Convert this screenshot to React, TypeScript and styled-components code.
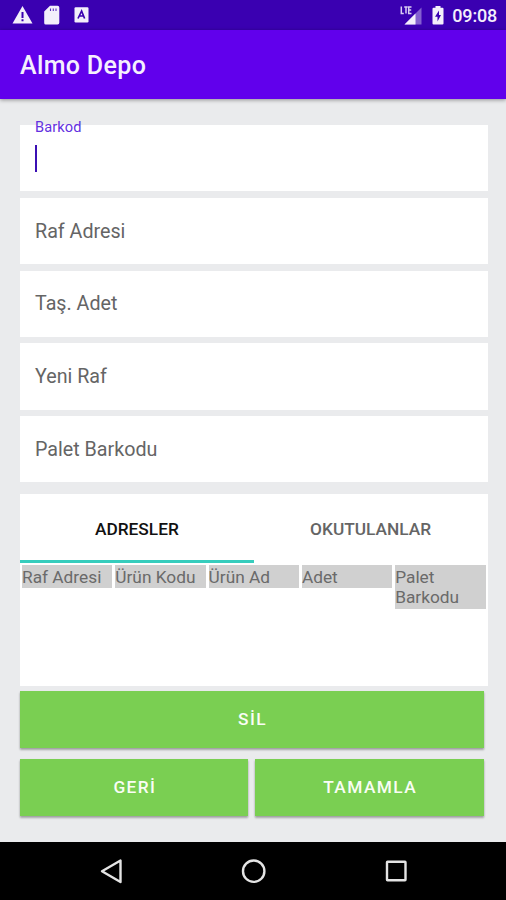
import React from "react";
import styled, { createGlobalStyle } from "styled-components";

const GlobalStyle = createGlobalStyle`
  * { box-sizing: border-box; }
  html, body { margin: 0; padding: 0; }
  body { font-family: Roboto, "Liberation Sans", sans-serif; }
`;

const Screen = styled.div`
  width: 506px;
  height: 900px;
  display: flex;
  flex-direction: column;
  overflow: hidden;
  background: #eaebed;
`;

const StatusBar = styled.header`
  height: 30px;
  flex: none;
  display: flex;
  align-items: center;
  justify-content: space-between;
  padding: 0 9px 0 12px;
  background: #3a00b1;
  color: #f3effb;
`;

const StatusGroup = styled.div`
  display: flex;
  align-items: center;
  height: 30px;
`;

const StatusIcon = styled.svg<{ $gap: number }>`
  display: block;
  margin-right: ${(p) => p.$gap}px;
`;

const Clock = styled.span`
  font-size: 18px;
  font-weight: 500;
  line-height: 30px;
  letter-spacing: -0.2px;
  padding-top: 2px;
`;

const AppBar = styled.div`
  height: 69px;
  flex: none;
  display: flex;
  align-items: center;
  padding: 2px 20px 0;
  background: #6100ec;
  box-shadow: 0 1px 4px rgba(0, 0, 0, 0.4);
`;

const Title = styled.h1`
  margin: 0;
  color: #f5effe;
  font-size: 25px;
  font-weight: 500;
  line-height: 30px;
  letter-spacing: 0.35px;
`;

const Content = styled.main`
  flex: 1;
  padding: 26.3px 18.5px 0 20px;
`;

const Fields = styled.div`
  display: flex;
  flex-direction: column;
  gap: 6.5px;
`;

const Field = styled.div`
  position: relative;
  height: 66.2px;
  display: flex;
  align-items: center;
  padding: 0 15px;
  background: #fff;
  color: #656565;
  font-size: 19.7px;
`;

const FloatingLabel = styled.span`
  position: absolute;
  left: 15px;
  top: -6px;
  color: #6331e0;
  font-size: 14.6px;
  line-height: 17px;
  letter-spacing: 0.1px;
`;

const Caret = styled.span`
  width: 2px;
  height: 27px;
  background: #3b10b4;
`;

const Panel = styled.section`
  height: 192px;
  margin-top: 12px;
  background: #fff;
`;

const Tabs = styled.div`
  display: grid;
  grid-template-columns: 1fr 1fr;
`;

const Tab = styled.div<{ $active?: boolean }>`
  height: 69px;
  padding-top: 3px;
  display: flex;
  align-items: center;
  justify-content: center;
  color: ${(p) => (p.$active ? "#111" : "#656565")};
  border-bottom: 3px solid ${(p) => (p.$active ? "#36cdbd" : "transparent")};
  font-size: 17.3px;
  font-weight: 500;
`;

const TableHead = styled.div`
  display: grid;
  grid-template-columns: repeat(5, 1fr);
  align-items: start;
  gap: 3px;
  padding: 2px 2px 0;
`;

const Cell = styled.div`
  padding: 2px 0 1px;
  background: #d0d0d0;
  color: #6a6a6a;
  font-size: 17.3px;
  line-height: 20.2px;
`;

const Actions = styled.div`
  display: grid;
  grid-template-columns: 1fr 1fr;
  gap: 11px 7px;
  padding: 5px 4px 0 0;
`;

const ActionButton = styled.button<{ $wide?: boolean }>`
  grid-column: ${(p) => (p.$wide ? "1 / -1" : "auto")};
  height: 57px;
  padding: 0 0 2px 1.5px;
  border: 0;
  background: #7acf52;
  box-shadow: 0 2px 2px rgba(0, 0, 0, 0.25), 0 1px 2px rgba(0, 0, 0, 0.12);
  color: #f9fdf5;
  font-family: inherit;
  font-size: 17.3px;
  font-weight: 500;
  letter-spacing: 1.4px;
`;

const NavBar = styled.nav`
  height: 58.5px;
  flex: none;
  background: #000;
`;

const NavIcons = styled.svg`
  display: block;
  width: 506px;
  height: 58px;
`;

const fields = ["Raf Adresi", "Taş. Adet", "Yeni Raf", "Palet Barkodu"];
const columns = ["Raf Adresi", "Ürün Kodu", "Ürün Ad", "Adet", "Palet Barkodu"];

export default function App() {
  return (
    <>
      <GlobalStyle />
      <Screen>
        <StatusBar>
          <StatusGroup>
            <StatusIcon $gap={11} width="21" height="20" viewBox="0 0 21 20">
              <path d="M10.5 1 20.5 18.5H.5Z" fill="currentColor" />
              <path d="M10.5 7v6M10.5 14.3v2" stroke="#3a00b1" strokeWidth="2" />
            </StatusIcon>
            <StatusIcon $gap={14} width="16" height="20" viewBox="0 0 16 20">
              <path d="M6 .8h7.5A1.8 1.8 0 0 1 15.3 2.6V17.8a1.8 1.8 0 0 1-1.8 1.8H1.8A1.6 1.6 0 0 1 .2 18V6.6Z" fill="currentColor" />
              <path d="M6.5 3.5v2.500M9.3 3.5v2.5M12 3.5v2.5" stroke="#3a00b1" strokeWidth="1.1" opacity=".8" />
            </StatusIcon>
            <StatusIcon $gap={0} width="15" height="16" viewBox="0 0 15 16">
              <rect x=".5" y=".3" width="14" height="15.2" rx="1.2" fill="currentColor" />
              <path d="M4 11.5 7.6 4l3 7.5M5.5 9h4" fill="none" stroke="#3a00b1" strokeWidth="1.7" />
            </StatusIcon>
          </StatusGroup>
          <StatusGroup>
            <StatusIcon $gap={10} width="22" height="20" viewBox="0 0 22 20">
              <path d="M21.5 2.5v17H4.5Z" fill="#8460d0" />
              <path d="M15.5 8.500v11h-11Z" fill="currentColor" />
              <path d="M1.3 1.5v7h2.5M4.2 2h3.500M6 2v6.5M11.5 2H8.7v6.500h2.8M8.7 5h2.5" fill="none" stroke="#d9cdf2" strokeWidth="1.5" />
            </StatusIcon>
            <StatusIcon $gap={8} width="12" height="20" viewBox="0 0 12 20">
              <path d="M3.5 1h5v1.7h2A1 1 0 0 1 11.5 3.7V18.5a1 1 0 0 1-1 1h-9a1 1 0 0 1-1-1V3.7a1 1 0 0 1 1-1h2Z" fill="currentColor" />
              <path d="M7 5.5 3 11.8h2.5V16.5L9 10H7Z" fill="#3a00b1" />
            </StatusIcon>
            <Clock>09:08</Clock>
          </StatusGroup>
        </StatusBar>
        <AppBar>
          <Title>Almo Depo</Title>
        </AppBar>
        <Content>
          <Fields>
            <Field>
              <FloatingLabel>Barkod</FloatingLabel>
              <Caret />
            </Field>
            {fields.map((name) => (
              <Field key={name}>{name}</Field>
            ))}
          </Fields>
          <Panel>
            <Tabs>
              <Tab $active>ADRESLER</Tab>
              <Tab>OKUTULANLAR</Tab>
            </Tabs>
            <TableHead>
              {columns.map((name) => (
                <Cell key={name}>{name}</Cell>
              ))}
            </TableHead>
          </Panel>
          <Actions>
            <ActionButton $wide>SİL</ActionButton>
            <ActionButton>GERİ</ActionButton>
            <ActionButton>TAMAMLA</ActionButton>
          </Actions>
        </Content>
        <NavBar>
          <NavIcons viewBox="0 0 506 58" fill="none" stroke="#e4e4e4" strokeWidth="2.4" strokeLinejoin="round">
            <path d="M120.5 18.500v21.500L102 29.2Z" />
            <circle cx="253.7" cy="29.200" r="10.7" />
            <rect x="387" y="19.7" width="18.500" height="18.5" rx=".5" />
          </NavIcons>
        </NavBar>
      </Screen>
    </>
  );
}
